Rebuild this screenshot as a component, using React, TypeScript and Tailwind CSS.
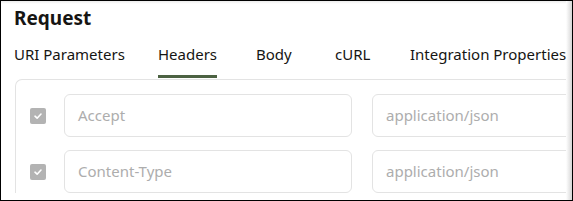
import React from "react";

const tabs: { t: string; w: string }[] = [
  { t: "URI Parameters", w: "w-[144px]" },
  { t: "Headers", w: "w-[98px]" },
  { t: "Body", w: "w-[79px]" },
  { t: "cURL", w: "w-[75px]" },
  { t: "Integration Properties", w: "w-[170px]" },
];

function Check() {
  return (
    <div className="w-4 h-4 rounded-[2px] bg-[#b3b3b3] flex items-center justify-center shrink-0">
      <svg width="10" height="10" viewBox="0 0 10 10" fill="none">
        <path d="M2 5.2 L4.1 7.2 L8 3" stroke="white" strokeWidth="1.6" strokeLinecap="round" strokeLinejoin="round" />
      </svg>
    </div>
  );
}

function Row({ name, value }: { name: string; value: string }) {
  return (
    <div className="flex items-center h-[43px]">
      <div className="w-[48px] shrink-0 pl-[14px] flex items-center">
        <Check />
      </div>
      <div className="w-[288px] h-[43px] shrink-0 rounded-[6px] border border-[#e3e3e3] flex items-center pl-[13px] text-[15px] text-[#adadad]">
        {name}
      </div>
      <div className="w-[300px] h-[43px] shrink-0 ml-[20px] rounded-[6px] border border-[#e3e3e3] flex items-center pl-[13px] text-[15px] text-[#adadad]">
        {value}
      </div>
    </div>
  );
}

export default function App() {
  return (
    <div
      className="relative w-[573px] h-[201px] border border-black bg-white overflow-hidden"
      style={{ fontFamily: '"Noto Sans", sans-serif' }}
    >
      <div className="absolute top-0 left-0 right-0 h-[3px] bg-gradient-to-b from-[#ececec] to-white" />
      <div className="pl-[13px] pt-[3px] text-[19px] font-bold text-[#161513] leading-[28px]">Request</div>
      <div className="flex pl-[13px] text-[15px] text-[#161513] whitespace-nowrap">
        {tabs.map(({ t, w }) => (
          <div key={t} className={`${w} shrink-0 h-[46px] flex items-center`}>
            <span className="relative h-full flex items-center pb-[2px]">
              {t}
              {t === "Headers" && (
                <span className="absolute left-0 right-0 bottom-0 h-[3px] bg-[#4c6242]" />
              )}
            </span>
          </div>
        ))}
      </div>
      <div className="ml-[14px] mt-[1px] rounded-tl-[7px] border-t border-l border-[#e3e3e3] pt-[14px] flex flex-col gap-[13px]">
        <Row name="Accept" value="application/json" />
        <Row name="Content-Type" value="application/json" />
      </div>
      <div className="absolute top-0 bottom-0 right-0 w-[6px] bg-gradient-to-r from-white to-[#d6d6d6]" />
    </div>
  );
}
